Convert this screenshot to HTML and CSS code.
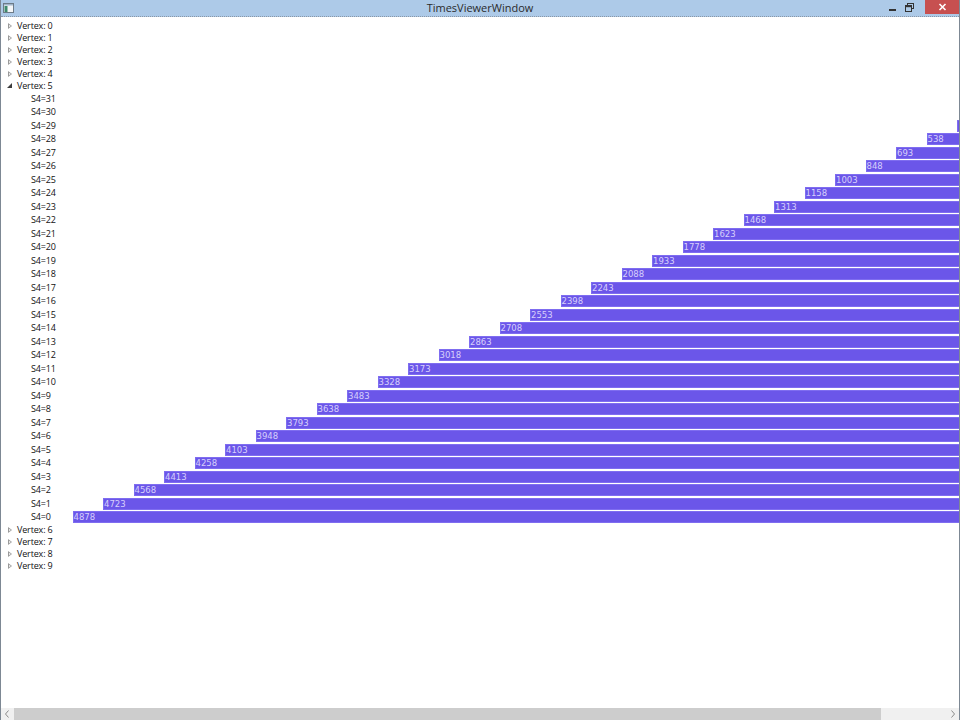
FILE: index.html
```html
<!DOCTYPE html>
<html>
<head>
<meta charset="utf-8">
<link rel="stylesheet" href="styles.css">
</head>
<body>
<div class="window">
  <div class="titlebar">
    <div class="appicon">
      <svg width="11" height="10" viewBox="0 0 11 10"><rect x="0.5" y="0.5" width="10" height="9" fill="#f4f6f8" stroke="#6d7b88"/><rect x="1" y="1" width="9" height="1.5" fill="#9fb4c8"/><rect x="1.5" y="3" width="3" height="6" fill="#3f8a6c"/></svg>
    </div>
    <div class="title">TimesViewerWindow</div>
    <div class="controls">
      <div class="ctl min"><svg width="9" height="9" viewBox="0 0 9 9"><rect x="1" y="6" width="7" height="2" fill="#333"/></svg></div>
      <div class="ctl restore"><svg width="9" height="9" viewBox="0 0 9 9"><rect x="2.5" y="0.5" width="6" height="5" fill="none" stroke="#333"/><rect x="0.5" y="2.5" width="6" height="6" fill="#aecbe8" stroke="#333"/><rect x="1" y="3" width="5" height="1.2" fill="#333"/></svg></div>
      <div class="ctl close"><svg width="9" height="8" viewBox="0 0 9 8"><path d="M1.5 1 L7.5 7 M7.5 1 L1.5 7" stroke="#fff" stroke-width="1.6"/></svg></div>
    </div>
  </div>
  <div class="content">
    <div class="tree">
      <div class="node"><span class="tog closed"></span><span class="lbl">Vertex: 0</span></div>
      <div class="node"><span class="tog closed"></span><span class="lbl">Vertex: 1</span></div>
      <div class="node"><span class="tog closed"></span><span class="lbl">Vertex: 2</span></div>
      <div class="node"><span class="tog closed"></span><span class="lbl">Vertex: 3</span></div>
      <div class="node"><span class="tog closed"></span><span class="lbl">Vertex: 4</span></div>
      <div class="node"><span class="tog open"></span><span class="lbl">Vertex: 5</span></div>
      <div class="children">
        <div class="child"><span class="clbl">S4=31</span><div class="track"></div></div>
        <div class="child"><span class="clbl">S4=30</span><div class="track"></div></div>
        <div class="child"><span class="clbl">S4=29</span><div class="track"><div class="bar" style="margin-left:884.5px"></div></div></div>
        <div class="child"><span class="clbl">S4=28</span><div class="track"><div class="bar" style="margin-left:854px">538</div></div></div>
        <div class="child"><span class="clbl">S4=27</span><div class="track"><div class="bar" style="margin-left:823.5px">693</div></div></div>
        <div class="child"><span class="clbl">S4=26</span><div class="track"><div class="bar" style="margin-left:793px">848</div></div></div>
        <div class="child"><span class="clbl">S4=25</span><div class="track"><div class="bar" style="margin-left:762.5px">1003</div></div></div>
        <div class="child"><span class="clbl">S4=24</span><div class="track"><div class="bar" style="margin-left:732px">1158</div></div></div>
        <div class="child"><span class="clbl">S4=23</span><div class="track"><div class="bar" style="margin-left:701.5px">1313</div></div></div>
        <div class="child"><span class="clbl">S4=22</span><div class="track"><div class="bar" style="margin-left:671px">1468</div></div></div>
        <div class="child"><span class="clbl">S4=21</span><div class="track"><div class="bar" style="margin-left:640.5px">1623</div></div></div>
        <div class="child"><span class="clbl">S4=20</span><div class="track"><div class="bar" style="margin-left:610px">1778</div></div></div>
        <div class="child"><span class="clbl">S4=19</span><div class="track"><div class="bar" style="margin-left:579.5px">1933</div></div></div>
        <div class="child"><span class="clbl">S4=18</span><div class="track"><div class="bar" style="margin-left:549px">2088</div></div></div>
        <div class="child"><span class="clbl">S4=17</span><div class="track"><div class="bar" style="margin-left:518.5px">2243</div></div></div>
        <div class="child"><span class="clbl">S4=16</span><div class="track"><div class="bar" style="margin-left:488px">2398</div></div></div>
        <div class="child"><span class="clbl">S4=15</span><div class="track"><div class="bar" style="margin-left:457.5px">2553</div></div></div>
        <div class="child"><span class="clbl">S4=14</span><div class="track"><div class="bar" style="margin-left:427px">2708</div></div></div>
        <div class="child"><span class="clbl">S4=13</span><div class="track"><div class="bar" style="margin-left:396.5px">2863</div></div></div>
        <div class="child"><span class="clbl">S4=12</span><div class="track"><div class="bar" style="margin-left:366px">3018</div></div></div>
        <div class="child"><span class="clbl">S4=11</span><div class="track"><div class="bar" style="margin-left:335.5px">3173</div></div></div>
        <div class="child"><span class="clbl">S4=10</span><div class="track"><div class="bar" style="margin-left:305px">3328</div></div></div>
        <div class="child"><span class="clbl">S4=9</span><div class="track"><div class="bar" style="margin-left:274.5px">3483</div></div></div>
        <div class="child"><span class="clbl">S4=8</span><div class="track"><div class="bar" style="margin-left:244px">3638</div></div></div>
        <div class="child"><span class="clbl">S4=7</span><div class="track"><div class="bar" style="margin-left:213.5px">3793</div></div></div>
        <div class="child"><span class="clbl">S4=6</span><div class="track"><div class="bar" style="margin-left:183px">3948</div></div></div>
        <div class="child"><span class="clbl">S4=5</span><div class="track"><div class="bar" style="margin-left:152.5px">4103</div></div></div>
        <div class="child"><span class="clbl">S4=4</span><div class="track"><div class="bar" style="margin-left:122px">4258</div></div></div>
        <div class="child"><span class="clbl">S4=3</span><div class="track"><div class="bar" style="margin-left:91.5px">4413</div></div></div>
        <div class="child"><span class="clbl">S4=2</span><div class="track"><div class="bar" style="margin-left:61px">4568</div></div></div>
        <div class="child"><span class="clbl">S4=1</span><div class="track"><div class="bar" style="margin-left:30.5px">4723</div></div></div>
        <div class="child"><span class="clbl">S4=0</span><div class="track"><div class="bar" style="margin-left:0px">4878</div></div></div>
      </div>
      <div class="node"><span class="tog closed"></span><span class="lbl">Vertex: 6</span></div>
      <div class="node"><span class="tog closed"></span><span class="lbl">Vertex: 7</span></div>
      <div class="node"><span class="tog closed"></span><span class="lbl">Vertex: 8</span></div>
      <div class="node"><span class="tog closed"></span><span class="lbl">Vertex: 9</span></div>
    </div>
  </div>
  <div class="hscroll">
    <div class="arrow left"><svg width="6" height="8" viewBox="0 0 6 8"><path d="M4.5 0.5 L1.5 4 L4.5 7.5" fill="none" stroke="#8a8a8a" stroke-width="1"/></svg></div>
    <div class="trackbar"><div class="thumb"></div></div>
    <div class="arrow right"><svg width="6" height="8" viewBox="0 0 6 8"><path d="M1.5 0.5 L4.5 4 L1.5 7.5" fill="none" stroke="#8a8a8a" stroke-width="1"/></svg></div>
  </div>
</div>
</body>
</html>
```

FILE: styles.css
```css
* { box-sizing: border-box; }
html, body { margin: 0; padding: 0; background: #fff; }
body { width: 960px; height: 720px; overflow: hidden; font-family: "Open Sans", "Noto Sans", "Liberation Sans", sans-serif; }

.window {
  width: 960px;
  height: 720px;
  display: flex;
  flex-direction: column;
  overflow: hidden;
  border-left: 1px solid #7d8894;
  border-right: 1px solid #7d8894;
}

.titlebar {
  height: 17px;
  flex: 0 0 17px;
  background: #adcae8;
  display: flex;
  align-items: flex-start;
  border-bottom: 1px dotted #8a97a6;
}
.appicon { padding: 3px 0 0 2px; width: 75px; flex: 0 0 75px; display: flex; }
.title {
  flex: 1;
  text-align: center;
  font-family: "Open Sans", "Noto Sans", sans-serif;
  font-size: 11px;
  line-height: 16px;
  color: #2b2b2b;
}
.controls { display: flex; height: 14px; flex: 0 0 75px; }
.ctl { display: flex; align-items: center; justify-content: center; height: 14px; }
.ctl.min { width: 17px; }
.ctl.restore { width: 17px; margin-right: 7px; }
.ctl.close { width: 34px; background: #c75050; }

.content {
  flex: 1;
  overflow: hidden;
  padding-top: 3px;
  background: #fff;
}

.tree { display: flex; flex-direction: column; }
.node {
  height: 12px;
  display: flex;
  align-items: center;
  padding-left: 6px;
}
.tog { width: 10px; height: 12px; position: relative; flex: 0 0 10px; }
.tog.closed::before {
  content: "";
  position: absolute;
  left: 1px; top: 3px;
  width: 0; height: 0;
  border-top: 3px solid transparent;
  border-bottom: 3px solid transparent;
  border-left: 4px solid #9a9a9a;
}
.tog.closed::after {
  content: "";
  position: absolute;
  left: 2px; top: 4.5px;
  width: 0; height: 0;
  border-top: 1.5px solid transparent;
  border-bottom: 1.5px solid transparent;
  border-left: 2px solid #fff;
}
.tog.open::before {
  content: "";
  position: absolute;
  left: 0px; top: 3px;
  width: 0; height: 0;
  border-left: 5px solid transparent;
  border-bottom: 5px solid #3c3c3c;
}
.lbl {
  font-size: 9px;
  line-height: 12px;
  color: #111;
  letter-spacing: -0.15px;
}

.children { display: flex; flex-direction: column; }
.child {
  height: 13.5px;
  display: flex;
  align-items: center;
}
.clbl {
  width: 71.5px;
  flex: 0 0 71.5px;
  padding-left: 30px;
  font-size: 9px;
  line-height: 12px;
  color: #111;
  letter-spacing: -0.15px;
}
.track {
  flex: 1;
  height: 12px;
  overflow: hidden;
  display: flex;
}
.bar {
  flex: 0 0 1200px;
  height: 12px;
  background: #6b56e9;
  border: 1px solid #7f6df0;
  color: #d7d0fb;
  font-family: "DejaVu Sans", "Liberation Sans", sans-serif;
  font-size: 8.5px;
  line-height: 10px;
  white-space: nowrap;
}

.hscroll {
  height: 12px;
  flex: 0 0 12px;
  display: flex;
  background: #f0f0f0;
}
.arrow { width: 12px; flex: 0 0 12px; display: flex; align-items: center; justify-content: center; }
.trackbar { flex: 1; }
.thumb { width: 867px; height: 12px; margin-left: 0.5px; background: #cdcdcd; }
```
